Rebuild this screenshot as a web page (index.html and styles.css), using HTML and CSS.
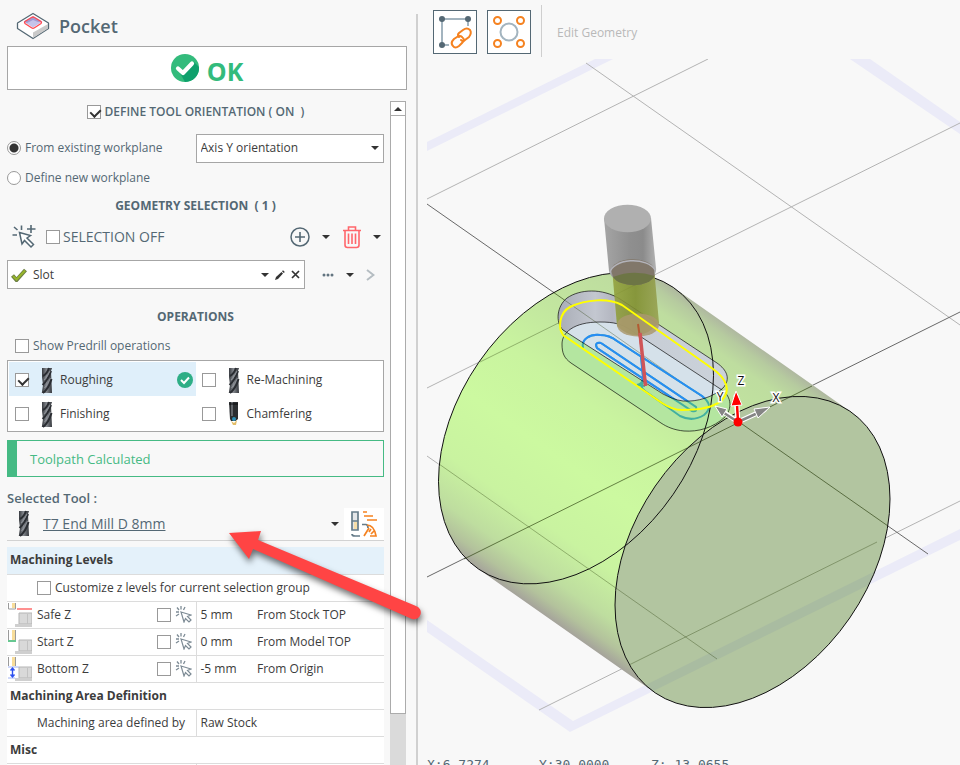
FILE: index.html
```html
<!DOCTYPE html>
<html lang="en">
<head>
<meta charset="utf-8">
<title>Pocket</title>
<link rel="stylesheet" href="styles.css">
</head>
<body>
<svg class="defs" aria-hidden="true">
  <defs>
    <linearGradient id="steel" x1="0" x2="1" y1="0" y2="0">
      <stop offset="0" stop-color="#34373c"/><stop offset=".45" stop-color="#85898f"/><stop offset="1" stop-color="#35383d"/>
    </linearGradient>
    <symbol id="mill" viewBox="0 0 12 27">
      <path d="M1 1L11 1L10 4L11 26L.8 26L2 18L1 10Z" fill="url(#steel)"/>
      <path d="M2 9Q6 7 8 1M1.500 18Q7 13 10 4M2 26Q8 21 10.500 12" stroke="#2a2d32" stroke-width="2" fill="none"/>
      <path d="M3 13Q7 9 9 4M3.500 21Q7 17 9.500 11" stroke="#8f939a" stroke-width="1" fill="none"/>
    </symbol>
    <symbol id="chamfer" viewBox="0 0 12 27">
      <path d="M1 1H10V18L7.500 20H3L2 18Z" fill="#2b2e31"/>
      <path d="M4 1V15" stroke="#777b80" stroke-width="1.500"/><path d="M1 3H10" stroke="#0c0d0e"/>
      <circle cx="6" cy="18" r="2" fill="#2b8fb8"/><path d="M3 20L5 24H8L9 19L6 22Z" fill="#e3bd66"/>
    </symbol>
    <symbol id="cursor" viewBox="0 0 17 17">
      <path d="M6 6L16 9L12.500 10.500L16 14L14 16L10.500 12.500L9 16Z" fill="#fff" stroke="#7d8b95" stroke-width="1.200"/>
      <path d="M1 6H4M2 1.500L4 4M6 0V3.500M10 1L8.500 4M1 10L4 8" stroke="#7d8b95" stroke-width="1.300" fill="none"/>
    </symbol>
    <symbol id="stockpart" viewBox="0 0 24 24">
      <path d="M11 10H24V21H11Z" fill="#d9d9d9" stroke="#b5b5b5"/><path d="M7 21H24V24H7Z" fill="#cfcfcf"/><path d="M19.500 11V21" stroke="#c2c2c2"/>
    </symbol>
  </defs>
</svg>
<div class="app">
  <aside class="panel">
    <header class="title">
      <svg class="title-icon" viewBox="0 0 34 28"><path d="M17 1.500L32.500 11V16.500L17 26.500L1.500 16.500V11Z" fill="#fff" stroke="#546874" stroke-width="1.300" stroke-linejoin="round"/><path d="M17 20.500L32 12V16.500L17 26Z" fill="#c9c9c9"/><path d="M17 4L26.500 9.500L17 15.500L7.500 9.500Z" fill="#c5c3ea"/><path d="M17 5L25 9.500L22 10L17 8L11 11L8 9.500Z" fill="#a09bd2"/><path d="M15.500 5.500Q17 4.500 18.500 5.500L25 9.500Q26 10.500 25 11.500L18.500 15.800Q17 16.800 15.500 15.800L9 11.500Q8 10.500 9 9.500Z" fill="none" stroke="#ff4a52" stroke-width="1.300"/></svg>
      <h1>Pocket</h1>
    </header>
    <button class="ok" type="button">
      <svg class="ok-icon" viewBox="0 0 28 28"><circle cx="14" cy="14" r="14" fill="#33bb7c"/><path d="M23 8L28 13A14 14 0 0 1 14 28L9 19Z" fill="#0fa06c"/><path d="M7 14.500L12 19L21 9.500" fill="none" stroke="#fff" stroke-width="4.200" stroke-linecap="round" stroke-linejoin="round"/></svg>
      <span>OK</span>
    </button>
    <div class="scroller">
      <div class="content">
        <label class="section"><input type="checkbox" class="box" checked>DEFINE TOOL ORIENTATION ( ON&nbsp; )</label>
        <div class="row plane">
          <label class="opt"><input type="radio" name="plane" class="radio" checked>From existing workplane</label>
          <select class="combo" aria-label="Workplane"><option>Axis Y orientation</option></select>
        </div>
        <div class="row second"><label class="opt"><input type="radio" name="plane" class="radio">Define new workplane</label></div>
        <h2 class="section">GEOMETRY SELECTION&nbsp; ( 1 )</h2>
        <div class="row selection">
          <svg class="pick" viewBox="0 0 26 26"><path d="M8.500 8.500L19.500 11.500L16 14L22.500 20.500L20 23L13.500 16.500L11 20Z" fill="#fff" stroke="#546874" stroke-width="1.500"/><path d="M1.500 11H6M3 3L6.500 6M10.500 1.500V6M20 1V9M16 5H24.500" stroke="#546874" stroke-width="1.600"/></svg>
          <label class="opt big"><input type="checkbox" class="box">SELECTION OFF</label>
          <button class="icon push" type="button" aria-label="Add"><svg viewBox="0 0 20 20" width="20" height="20"><circle cx="10" cy="10" r="9" fill="none" stroke="#546874" stroke-width="1.500"/><path d="M5 10H15M10 5V15" stroke="#546874" stroke-width="1.600"/></svg></button>
          <button class="icon arrow" type="button" aria-label="Add options"><i class="caret"></i></button>
          <button class="icon" type="button" aria-label="Delete"><svg viewBox="0 0 20 24" width="20" height="24"><path d="M1 5.500H19M6.500 5V2H13.500V5M3 6V20Q3 22.500 5.500 22.500H14.500Q17 22.500 17 20V6M6.500 8.500V19M10 8.500V19M13.500 8.500V19" fill="none" stroke="#ff666b" stroke-width="1.600"/></svg></button>
          <button class="icon arrow" type="button" aria-label="Delete options"><i class="caret"></i></button>
        </div>
        <div class="row slotrow">
          <div class="slot">
            <svg viewBox="0 0 16 14" width="16" height="14"><path d="M1.500 7.500L5.500 12L14.500 2" fill="none" stroke="#6c7f45" stroke-width="4"/><path d="M2 8L5.500 11.500L14 2.500" fill="none" stroke="#97b52b" stroke-width="2"/></svg>
            <span>Slot</span>
            <button class="icon push" type="button" aria-label="List"><i class="caret"></i></button>
            <button class="icon" type="button" aria-label="Edit"><svg viewBox="0 0 10 10" width="10" height="10"><path d="M0 10L1 7L6.500 2L8 3.500L3 9ZM7 1.200L8 .2L9.800 2L8.800 3Z" fill="#333"/></svg></button>
            <button class="icon" type="button" aria-label="Remove"><svg viewBox="0 0 9 9" width="9" height="9"><path d="M1 1L8 8M8 1L1 8" stroke="#333" stroke-width="1.700"/></svg></button>
          </div>
          <button class="icon dots" type="button" aria-label="More"><svg viewBox="0 0 12 4" width="12" height="4"><circle cx="2" cy="2" r="1.500" fill="#627480"/><circle cx="6" cy="2" r="1.500" fill="#627480"/><circle cx="10" cy="2" r="1.500" fill="#627480"/></svg></button>
          <button class="icon" type="button" aria-label="More options"><i class="caret"></i></button>
          <button class="icon next" type="button" aria-label="Next"><svg viewBox="0 0 9 12" width="9" height="12"><path d="M1 1L7.500 6L1 11" fill="none" stroke="#b5bdc2" stroke-width="2"/></svg></button>
        </div>
        <h2 class="section ops">OPERATIONS</h2>
        <label class="opt predrill"><input type="checkbox" class="box">Show Predrill operations</label>
        <div class="operations">
          <label class="op on"><input type="checkbox" class="box" checked><svg class="mill"><use href="#mill"/></svg>Roughing<svg class="done" viewBox="0 0 16 16"><circle cx="8" cy="8" r="8" fill="#2eae86"/><path d="M4 8L7 11L12 5.500" fill="none" stroke="#fff" stroke-width="2"/></svg></label>
          <label class="op"><input type="checkbox" class="box"><svg class="mill"><use href="#mill"/></svg>Re-Machining</label>
          <label class="op"><input type="checkbox" class="box"><svg class="mill"><use href="#mill"/></svg>Finishing</label>
          <label class="op"><input type="checkbox" class="box"><svg class="mill"><use href="#chamfer"/></svg>Chamfering</label>
        </div>
        <div class="status">Toolpath Calculated</div>
        <h3 class="tool-label">Selected Tool :</h3>
        <div class="row tool">
          <svg class="mill"><use href="#mill"/></svg>
          <a href="#">T7 End Mill D 8mm</a>
          <button class="icon push" type="button" aria-label="Choose tool"><i class="caret"></i></button>
          <button class="icon feeds" type="button" aria-label="Feeds and speeds"><svg viewBox="0 0 28 28" width="28" height="28"><path d="M2 2H8V20H2Z" fill="#e3e6e8" stroke="#667c89" stroke-width="1.700"/><path d="M4 12H7V19H4Z" fill="#f7dfa8"/><path d="M2 11H8" stroke="#667c89" stroke-width="1.500"/><path d="M2 24Q2 26 5 26H10M12 14.500H16Q18 15 18 18" fill="none" stroke="#667c89" stroke-width="1.700"/><path d="M13 2H17M14 6H23M17 10H27M14 26L19 18M17 15Q24 15 26 26H20M21 19L19 22M24 21L21 24" fill="none" stroke="#f58220" stroke-width="1.700"/></svg></button>
        </div>
        <table class="params">
          <colgroup><col class="c-name"><col class="c-pick"><col class="c-val"><col></colgroup>
          <tbody>
            <tr class="group first"><th colspan="4">Machining Levels</th></tr>
            <tr><td colspan="4" class="indent"><label class="opt"><input type="checkbox" class="box">Customize z levels for current selection group</label></td></tr>
            <tr><td><div class="cell"><svg class="lvl" viewBox="0 0 24 24"><path d="M.5 0V6H7.500V0" fill="#fff" stroke="#9a9a9a"/><path d="M4 0H7V5H4Z" fill="#f8dd9a"/><path d="M9 6H24" stroke="#ff6b6b" stroke-width="1.500"/><use href="#stockpart"/></svg>Safe Z</div></td><td><div class="picks"><input type="checkbox" class="box" aria-label="Safe Z"><svg class="cursor"><use href="#cursor"/></svg></div></td><td class="val">5 mm</td><td>From Stock TOP</td></tr>
            <tr><td><div class="cell"><svg class="lvl" viewBox="0 0 24 24"><path d="M.5 0V10M7.500 0V10" fill="none" stroke="#9a9a9a"/><path d="M4 0H7V10H4Z" fill="#f8dd9a"/><path d="M0 11H8" stroke="#35b56c" stroke-width="1.500"/><use href="#stockpart"/></svg>Start Z</div></td><td><div class="picks"><input type="checkbox" class="box" aria-label="Start Z"><svg class="cursor"><use href="#cursor"/></svg></div></td><td class="val">0 mm</td><td>From Model TOP</td></tr>
            <tr><td><div class="cell"><svg class="lvl" viewBox="0 0 24 24"><path d="M.5 0V9M7.500 0V9" fill="none" stroke="#9a9a9a"/><path d="M4 0H7V9H4Z" fill="#f8dd9a"/><path d="M0 10H11M0 21H7" stroke="#9fb2f5"/><path d="M4.500 11V20M2.500 13.500L4.500 11L6.500 13.500M2.500 17.500L4.500 20L6.500 17.500" fill="none" stroke="#2c50f0" stroke-width="1.400"/><use href="#stockpart"/></svg>Bottom Z</div></td><td><div class="picks"><input type="checkbox" class="box" aria-label="Bottom Z"><svg class="cursor"><use href="#cursor"/></svg></div></td><td class="val">-5 mm</td><td>From Origin</td></tr>
            <tr class="group"><th colspan="4">Machining Area Definition</th></tr>
            <tr><td colspan="2" class="indent">Machining area defined by</td><td colspan="2" class="val">Raw Stock</td></tr>
            <tr class="group"><th colspan="4">Misc</th></tr>
            <tr><td colspan="2"></td><td colspan="2" class="val"></td></tr>
          </tbody>
        </table>
      </div>
      <div class="bar"><button class="up" type="button" aria-label="Scroll up"><i class="caret flip"></i></button><div class="thumb"></div></div>
    </div>
    <svg class="pointer" viewBox="0 0 204 104"><path d="M5 9L37 7L34 16L192 82A6 6 0 0 1 188 95L29 25L25 35Z" fill="#ff4444"/></svg>
  </aside>
  <main class="view">
    <div class="tools">
      <button class="tile" type="button" aria-label="Chain selection"><svg viewBox="0 0 42 42" width="42" height="42"><path d="M8 34V8H34V15M8 34H15" fill="none" stroke="#a3b4bf" stroke-width="2"/><circle cx="8" cy="8" r="3" fill="#546874"/><circle cx="34" cy="8" r="3" fill="#546874"/><circle cx="8" cy="34" r="3" fill="#546874"/><g fill="none" stroke="#f58220" stroke-width="2" stroke-linecap="round"><path d="M25 26Q23 24 25 22L29 19Q33 16 36 19Q38 22 35 26L31 29Q29 31 27 29"/><path d="M29 27Q31 29 28 32L25 35Q21 38 19 35Q16 32 20 28L23 26Q26 24 28 26"/></g></svg></button>
      <button class="tile" type="button" aria-label="Hole selection"><svg viewBox="0 0 42 42" width="42" height="42"><circle cx="21" cy="21" r="8.500" fill="none" stroke="#a3b4bf" stroke-width="2"/><g fill="none" stroke="#f58220" stroke-width="2"><circle cx="9.500" cy="9.500" r="3.500"/><circle cx="32.500" cy="9.500" r="3.500"/><circle cx="9.500" cy="32.500" r="3.500"/><circle cx="32.500" cy="32.500" r="3.500"/></g></svg></button>
      <span class="edit">Edit Geometry</span>
    </div>
    <svg class="scene" viewBox="427 59 533 706" preserveAspectRatio="xMinYMin slice">
      <defs>
        <linearGradient id="body" gradientUnits="userSpaceOnUse" x1=".7144" y1="-.6999" x2="-.7144" y2=".6999">
          <stop offset="0" stop-color="#afb8a0"/><stop offset=".03" stop-color="#b6cb9f"/><stop offset=".08" stop-color="#bedd9f"/><stop offset=".25" stop-color="#c2e69f"/><stop offset=".42" stop-color="#c9f49f"/><stop offset=".6" stop-color="#ccf9a0"/><stop offset=".78" stop-color="#c9f3a0"/><stop offset=".9" stop-color="#bedd9f"/><stop offset=".96" stop-color="#b3c29c"/><stop offset="1" stop-color="#a5a39b"/>
        </linearGradient>
        <linearGradient id="wall" x1="0" x2="1"><stop offset="0" stop-color="#a9adb6"/><stop offset=".22" stop-color="#c3c7d0"/><stop offset=".32" stop-color="#b4b7c1"/><stop offset=".5" stop-color="#c7cdd5"/><stop offset="1" stop-color="#cbd2da"/></linearGradient>
        <linearGradient id="shank" x1="0" x2="1"><stop offset="0" stop-color="#a5a5a5"/><stop offset=".5" stop-color="#8f8f8f"/><stop offset=".75" stop-color="#8b8b8b"/><stop offset="1" stop-color="#b2b2b2"/></linearGradient>
        <linearGradient id="cutter" x1="0" x2="1"><stop offset="0" stop-color="#93a13e"/><stop offset=".5" stop-color="#7f8d2e"/><stop offset="1" stop-color="#96a050"/></linearGradient>
        <clipPath id="face"><circle r="1" transform="matrix(137.5 -53 0 146.3 752.5 552)"/></clipPath>
        <clipPath id="opening"><path id="rim" d="M563 330C555 322 557 306 567 298C580 289 602 288 620 299L717 363C727 370 731 379 723 388C713 397 698 402 683 401C675 400 669 397 663 394Z"/></clipPath>
        <path id="floor" d="M562 344C562 333 573 322 600 322C614 322 621 324 629 329L722 390C732 397 732 409 725 417C713 428 698 432 684 431C674 430 667 427 661 423L571 363C564 358 562 353 562 344Z"/>
        <path id="path3d" d="M583 348C581 339 590 334 600 335C606 335 612 337 617 341L702 396C711 403 711 409 704 415C696 420 688 420 680 416L645 391Q638 386 645 381M601 343L696 407Q698 412 692 411L597 348Q594 342 601 343M641 356L643 377Q643 384 637 385L645 386"/>
      </defs>
      <g fill="#ebebf8">
        <path d="M427 142L595 59H613L427 151Z"/><path d="M850 59H870L960 122V134Z"/><path d="M427 620L573 721L960 529V540L570 732L427 632Z"/>
      </g>
      <g class="grid"><path d="M427 199L708 59M586 63L960 325M427 388L960 123M427 456L717 659M539 710L960 501"/></g>
      <g class="axis"><path d="M427 577L960 312M427 204L928 554"/></g>
      <path transform="matrix(137.5 -53 0 146.3 576 428.3)" d="M.7144 -.6999A1 1 0 0 0 -.7144 .6999L.5692 2.0104L1.998 .6106Z" fill="url(#body)"/>
      <circle r="1" transform="matrix(137.5 -53 0 146.3 752.5 552)" fill="#b2c5a0"/>
      <path d="M573 721L960 529V540L570 732Z" fill="#a9bca1" clip-path="url(#face)"/>
      <path class="thru" d="M480 362L655 275M439 464L717 659M629 665L877 542"/>
      <path class="thru dark" d="M464 559L812 386M553 292L888 526"/>
      <use href="#floor" fill="#b4e6a0"/>
      <use href="#rim" fill="url(#wall)"/>
      <g clip-path="url(#opening)"><use href="#floor" fill="#d5e1ea"/><path class="thru" d="M553 292L738 422"/></g>
      <use href="#path3d" class="cut deep"/>
      <use href="#path3d" class="cut" clip-path="url(#opening)"/>
      <use href="#floor" class="edge faint"/><use href="#rim" class="edge faint"/>
      <circle class="edge" r="1" transform="matrix(137.5 -53 0 146.3 576 428.3)"/>
      <circle class="edge" r="1" transform="matrix(137.5 -53 0 146.3 752.5 552)"/>
      <path d="M612 268L617 326Q638 346 659 323L654 268Z" fill="url(#cutter)" opacity=".88"/>
      <ellipse cx="638" cy="325" rx="21" ry="11.500" fill="#aa996e" opacity=".85"/>
      <path d="M604 218L609 271A23 13.500 0 0 0 656 268L651 218Z" fill="url(#shank)"/>
      <ellipse cx="627.500" cy="218.500" rx="23.500" ry="13.700" fill="#b0b0b0"/>
      <path d="M611 270A22 12 0 0 1 654 268L654.500 276A22 13 0 0 1 613 277Z" fill="#81776a"/>
      <path d="M613 277Q633 269 654.500 276A22 13 0 0 1 613 277Z" fill="#6d7545"/>
      <path d="M610 273A23 13 0 0 1 655 270" fill="none" stroke="#b3b3ba" stroke-width="1.500"/>
      <path d="M638 324L641 345" stroke="#b25b32" stroke-width="2"/><path d="M640 333L645.500 386" stroke="#cf5558" stroke-width="3.500"/>
      <path d="M563 335C558 328 559 313 570 307C586 299 609 298 622 305L713 369C727 379 731 391 722 400C712 409 696 410 682 410C674 410 668 407 662 403Z" fill="none" stroke="#ff0" stroke-width="2"/>
      <g stroke="#fff" stroke-width="5" stroke-linecap="round"><path d="M738 422L736 396M738 422L764 410M738 422L722 411"/></g>
      <path d="M738 422L760 412M738 422L724 413" stroke="#858585" stroke-width="2.500"/>
      <path d="M770 407L754 409L758 418ZM715 406L727 409L722 417Z" fill="#858585" stroke="#fff"/>
      <path d="M738 422L737 404" stroke="red" stroke-width="2.500"/><path d="M736 391L731 406L742 405Z" fill="red" stroke="#fff"/><circle cx="738" cy="422" r="4.500" fill="red"/>
      <g class="names"><text x="741" y="385">Z</text><text x="776" y="402">X</text><text x="720" y="401">Y</text></g>
    </svg>
    <footer class="coords"><span>X:6.7274</span><span>Y:30.0000</span><span>Z:-13.0655</span></footer>
  </main>
</div>
</body>
</html>
```
FILE: styles.css
```css
* { box-sizing: border-box; }
body {
  margin: 0;
  height: 100vh;
  overflow: hidden;
  background: #f8f8f8;
  color: #3c3c3c;
  font: 12px/16px "Open Sans", "Noto Sans", sans-serif;
}
h1, h2, h3 { margin: 0; font-size: inherit; }
svg { display: block; flex: none; }
.defs { position: absolute; width: 0; height: 0; }
.app { display: flex; height: 100%; }

.panel {
  position: relative;
  display: flex;
  flex-direction: column;
  flex: 0 0 26rem;
  min-height: 0;
  padding-left: 7px;
}
.title { display: flex; align-items: center; gap: 9px; height: 46px; padding: 6px 0 0 9px; }
.title-icon { width: 34px; height: 28px; }
.title h1 { font-size: 18px; line-height: 24px; font-weight: 600; color: #546874; }
.ok {
  display: flex;
  align-items: center;
  justify-content: center;
  gap: 8px;
  flex: none;
  height: 44px;
  margin-right: 9px;
  padding: 0;
  border: 1px solid #a6a6a6;
  background: #fff;
  color: #33bb7c;
  font: bold 25px/32px "Open Sans", sans-serif;
}
.ok span { padding-top: 6px; }
.ok-icon { width: 28px; height: 28px; }

.scroller { display: flex; flex: 1; gap: 6px; min-height: 0; padding: 11px 10px 0 0; }
.content { flex: 1; min-width: 0; overflow: hidden; padding-top: 1px; }
.bar { width: 16px; background: #dadada; }
.up { display: flex; align-items: center; justify-content: center; width: 100%; height: 15px; padding: 0; border: 1px solid #ababab; background: #fff; }
.thumb { height: 598px; border: 1px solid #ababab; border-top: 0; background: #fff; }

.section {
  display: flex;
  align-items: center;
  justify-content: center;
  gap: 4px;
  height: 20px;
  color: #546874;
  font-weight: 600;
}
h2.section { font-weight: 700; }
.row { display: flex; align-items: center; }
.box, .radio {
  appearance: none;
  flex: none;
  width: 14px;
  height: 14px;
  margin: 0;
  border: 1px solid #999;
  background: #fff;
}
.box:checked { position: relative; }
.box:checked::after {
  content: "";
  position: absolute;
  left: 4px;
  top: 1px;
  width: 5px;
  height: 8px;
  border: solid #333;
  border-width: 0 2px 2px 0;
  transform: rotate(45deg);
}
.radio { border-radius: 50%; }
.radio:checked { background: radial-gradient(circle, #333 0 4px, #fff 5px); }
.opt { display: flex; align-items: center; gap: 4px; color: #546874; }
.combo {
  appearance: none;
  width: 50%;
  height: 29px;
  padding: 0 4px;
  border: 1px solid #a6a6a6;
  border-radius: 0;
  background: #fff;
  color: #3c3c3c;
  font: inherit;
}
.plane { justify-content: space-between; height: 30px; margin-top: 11px; position: relative; }
.plane::after {
  content: "";
  position: absolute;
  right: 5px;
  border: solid transparent;
  border-width: 4px 4px 0;
  border-top-color: #333;
  pointer-events: none;
}
.second { height: 20px; margin: 5px 0 8px; }

.icon { display: flex; align-items: center; justify-content: center; flex: none; padding: 0; border: 0; background: none; }
.push { margin-left: auto; }
.caret { display: block; border: solid transparent; border-width: 4px 4px 0; border-top-color: #333; }
.flip { transform: rotate(180deg); }
.selection { height: 42px; gap: 9px; padding-left: 4px; }
.pick { width: 26px; height: 26px; }
.big { font-size: 14px; gap: 3px; }
.arrow { padding: 0 3px; }
.selection .arrow:last-child { padding: 0 3px 0 2px; }
.slotrow { gap: 12px; padding-right: 9px; margin-top: 2px; }
.slot { display: flex; align-items: center; flex: 1; gap: 6px; height: 29px; padding: 0 4px 0 3px; border: 1px solid #a6a6a6; background: #fff; }
.dots { margin-left: 5px; }
.ops { margin-top: 18px; }
.predrill { height: 20px; margin: 9px 0 4px; padding-left: 8px; }
.operations { display: grid; grid-template-columns: 1fr 1fr; padding: 1px; border: 1px solid #a6a6a6; background: #fff; }
.op { display: flex; align-items: center; height: 34px; padding: 2px 3px 0 6px; color: #3c3c3c; }
.on { background: #dfeffa; }
.mill { width: 12px; height: 27px; margin: 0 7px 0 12px; }
.done { width: 16px; height: 16px; margin-left: auto; }
.status {
  display: flex;
  align-items: center;
  height: 37px;
  margin-top: 8px;
  padding-left: 13px;
  border: 1px solid #45ba84;
  border-left-width: 10px;
  color: #45ba84;
  font-size: 13px;
}
.tool-label { margin-top: 12px; color: #546874; font-size: 13px; font-weight: 600; line-height: 18px; }
.tool { height: 34px; border-bottom: 1px solid #d2d2d2; }
.tool .mill { margin: 0 13px 0 11px; }
.tool a { color: #546874; font-size: 14px; }
.feeds { width: 40px; height: 32px; margin-left: 5px; background: #fff; }

.params { width: 100%; margin-top: 6px; border-collapse: collapse; table-layout: fixed; background: #fff; }
.params tr { height: 27px; border-bottom: 1px solid #dcdcdc; }
.params td, .params th { padding: 0; text-align: left; }
.params th { padding-left: 3px; font-weight: 700; }
.first th { background: #e4f1fa; }
.c-name { width: 150px; }
.c-pick { width: 39px; }
.c-val { width: 61px; }
.params .indent { padding-left: 30px; }
.params .val { padding-left: 4px; border-left: 1px solid #dcdcdc; }
.params .opt { color: #3c3c3c; }
.cell { display: flex; align-items: center; gap: 5px; }
.lvl { width: 24px; height: 24px; margin-left: 1px; }
.picks { display: flex; align-items: center; gap: 4px; }
.cursor { width: 17px; height: 17px; }
.pointer { position: absolute; left: 224px; top: 524px; z-index: 2; width: 204px; height: 104px; overflow: visible; pointer-events: none; filter: drop-shadow(1px 4px 3px rgba(0, 0, 0, .55)); }

.view { position: relative; display: flex; flex-direction: column; flex: 1; min-width: 0; padding-left: 11px; }
.view::before { content: ""; position: absolute; left: 0; top: 14px; bottom: 0; width: 2px; background: #d0d0d0; }
.tools { display: flex; align-items: center; gap: 10px; height: 59px; flex: none; padding: 5px 6px 0; }
.tile { width: 44px; height: 44px; padding: 0; border: 1px solid #546874; background: #fff; }
.edit { align-self: stretch; display: flex; align-items: center; margin-bottom: 2px; padding: 3px 0 0 15px; border-left: 1px solid #cfcfcf; color: #b9b9b9; }
.scene { flex: 1; width: 100%; min-height: 0; }
.grid { fill: none; stroke: #b3b3b3; }
.axis { fill: none; stroke: #686868; }
.thru { fill: none; stroke: rgba(40, 60, 10, .35); }
.thru.dark { stroke: rgba(30, 50, 0, .6); }
.edge { fill: none; stroke: #111; stroke-width: 1; vector-effect: non-scaling-stroke; }
.faint { stroke: rgba(0, 0, 0, .65); }
.cut { fill: none; stroke: #278cf5; stroke-width: 2; }
.deep { stroke: #42b0a0; }
.names { fill: #111; stroke: #fff; stroke-width: 3; paint-order: stroke; font: 12px "Open Sans", sans-serif; text-anchor: middle; }
.coords { position: absolute; left: 11px; bottom: -8px; display: flex; color: #546874; font: 13px/16px "DejaVu Sans Mono", monospace; }
.coords span { width: 112px; }
```
